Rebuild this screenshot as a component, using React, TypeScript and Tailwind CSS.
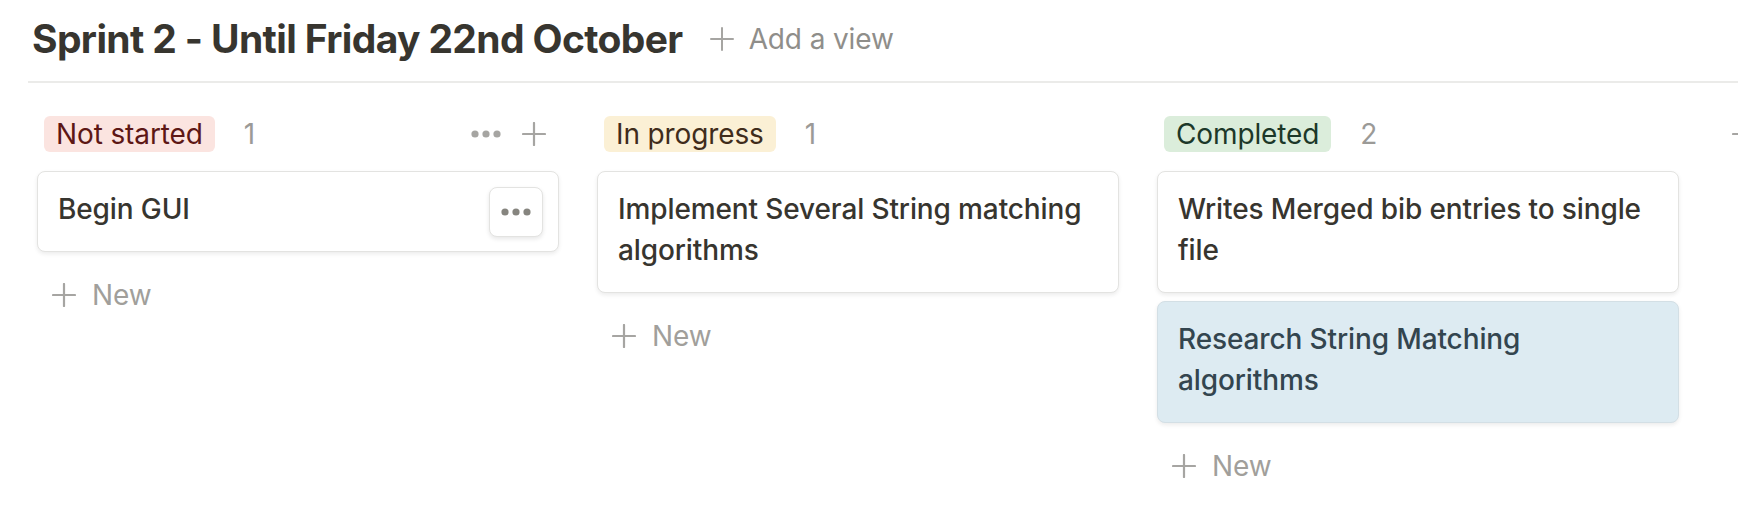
import React from "react";

function PlusIcon({ className = "", color = "#9b9a97", size = 24, stroke = 2 }: { className?: string; color?: string; size?: number; stroke?: number }) {
  return (
    <svg className={className} width={size} height={size} viewBox="0 0 24 24" fill="none">
      <line x1="12" y1="1" x2="12" y2="23" stroke={color} strokeWidth={stroke} strokeLinecap="round" />
      <line x1="1" y1="12" x2="23" y2="12" stroke={color} strokeWidth={stroke} strokeLinecap="round" />
    </svg>
  );
}

function Dots({ color }: { color: string }) {
  return (
    <svg width="30" height="8" viewBox="0 0 30 8">
      <circle cx="4" cy="4" r="3.6" fill={color} />
      <circle cx="15" cy="4" r="3.6" fill={color} />
      <circle cx="26" cy="4" r="3.6" fill={color} />
    </svg>
  );
}

type Card = { title: string; highlight?: boolean; menu?: boolean };
type Group = { name: string; count: number; pillBg: string; pillText: string; cards: Card[]; actions?: boolean };

const groups: Group[] = [
  {
    name: "Not started",
    count: 1,
    pillBg: "bg-[#fbe4e0]",
    pillText: "text-[#5d1715]",
    cards: [{ title: "Begin GUI", menu: true }],
    actions: true,
  },
  {
    name: "In progress",
    count: 1,
    pillBg: "bg-[#fbf0d5]",
    pillText: "text-[#402c1b]",
    cards: [{ title: "Implement Several String matching algorithms" }],
  },
  {
    name: "Completed",
    count: 2,
    pillBg: "bg-[#dbeddb]",
    pillText: "text-[#1c3829]",
    cards: [
      { title: "Writes Merged bib entries to single file" },
      { title: "Research String Matching algorithms", highlight: true },
    ],
  },
];

function CardView({ card }: { card: Card }) {
  return (
    <div
      className={
        "relative rounded-[8px] border pt-[17px] pb-[21px] pl-[20px] pr-[24px] text-[28px] leading-[41px] tracking-[-0.12px] font-medium shadow-[0_2px_4px_rgba(15,15,15,0.08)] " +
        (card.highlight
          ? "bg-[#ddebf2] border-[#d3dfe5] text-[#33454f]"
          : "bg-white border-[#e3e3e1] text-[#37352f]")
      }
    >
      {card.title}
      {card.menu && (
        <div className="absolute top-[15px] right-[15px] w-[54px] h-[50px] rounded-[8px] border border-[#e3e3e1] bg-white shadow-[0_2px_4px_rgba(15,15,15,0.1)] flex items-center justify-center">
          <Dots color="#86857f" />
        </div>
      )}
    </div>
  );
}

function GroupColumn({ group }: { group: Group }) {
  return (
    <div className="w-[522px] shrink-0 flex flex-col">
      <div className="flex items-center h-[36px] mb-[19px]">
        <div className={"ml-[7px] h-[36px] px-[12px] rounded-[6px] text-[28px] leading-[36px] tracking-[-0.12px] " + group.pillBg + " " + group.pillText}>
          {group.name}
        </div>
        <div className="ml-[29px] text-[28px] leading-[36px] text-[#9b9a97]">{group.count}</div>
        {group.actions && (
          <div className="ml-auto mr-[13px] flex items-center">
            <Dots color="#a6a5a2" />
            <PlusIcon className="ml-[21px]" color="#a6a5a2" stroke={2.2} />
          </div>
        )}
      </div>
      <div className="flex flex-col gap-[8px]">
        {group.cards.map((c, i) => (
          <CardView key={i} card={c} />
        ))}
      </div>
      <div className="mt-[21px] h-[44px] flex items-center pl-[15px]">
        <PlusIcon color="#a6a5a2" stroke={2.2} />
        <span className="ml-[16px] text-[28px] leading-[44px] tracking-[-0.12px] text-[#a19f9b]">New</span>
      </div>
    </div>
  );
}

export default function App() {
  return (
    <div className="w-[1738px] h-[522px] bg-white overflow-hidden font-['Inter',sans-serif]">
      <div className="pl-[28px]">
        <div className="h-[81px] flex items-center pl-[4px] pb-[4px]">
          <h1 className="text-[39px] leading-[48px] font-bold text-[#37352f] tracking-[-0.63px]">
            Sprint 2 - Until Friday 22nd October
          </h1>
          <div className="ml-[27px] flex items-center">
            <PlusIcon color="#a6a5a2" stroke={2} />
            <span className="ml-[15px] text-[28px] leading-[40px] tracking-[-0.12px] text-[#8f8e8a]">Add a view</span>
          </div>
        </div>
        <div className="h-[2px] bg-[#ebebe9]" />
      </div>
      <div className="flex gap-[38px] pl-[37px] pt-[33px]">
        {groups.map((g) => (
          <GroupColumn key={g.name} group={g} />
        ))}
        <div className="w-[200px] shrink-0">
          <div className="h-[36px] flex items-center pl-[15px]">
            <PlusIcon color="#a6a5a2" stroke={2.2} />
          </div>
        </div>
      </div>
    </div>
  );
}
